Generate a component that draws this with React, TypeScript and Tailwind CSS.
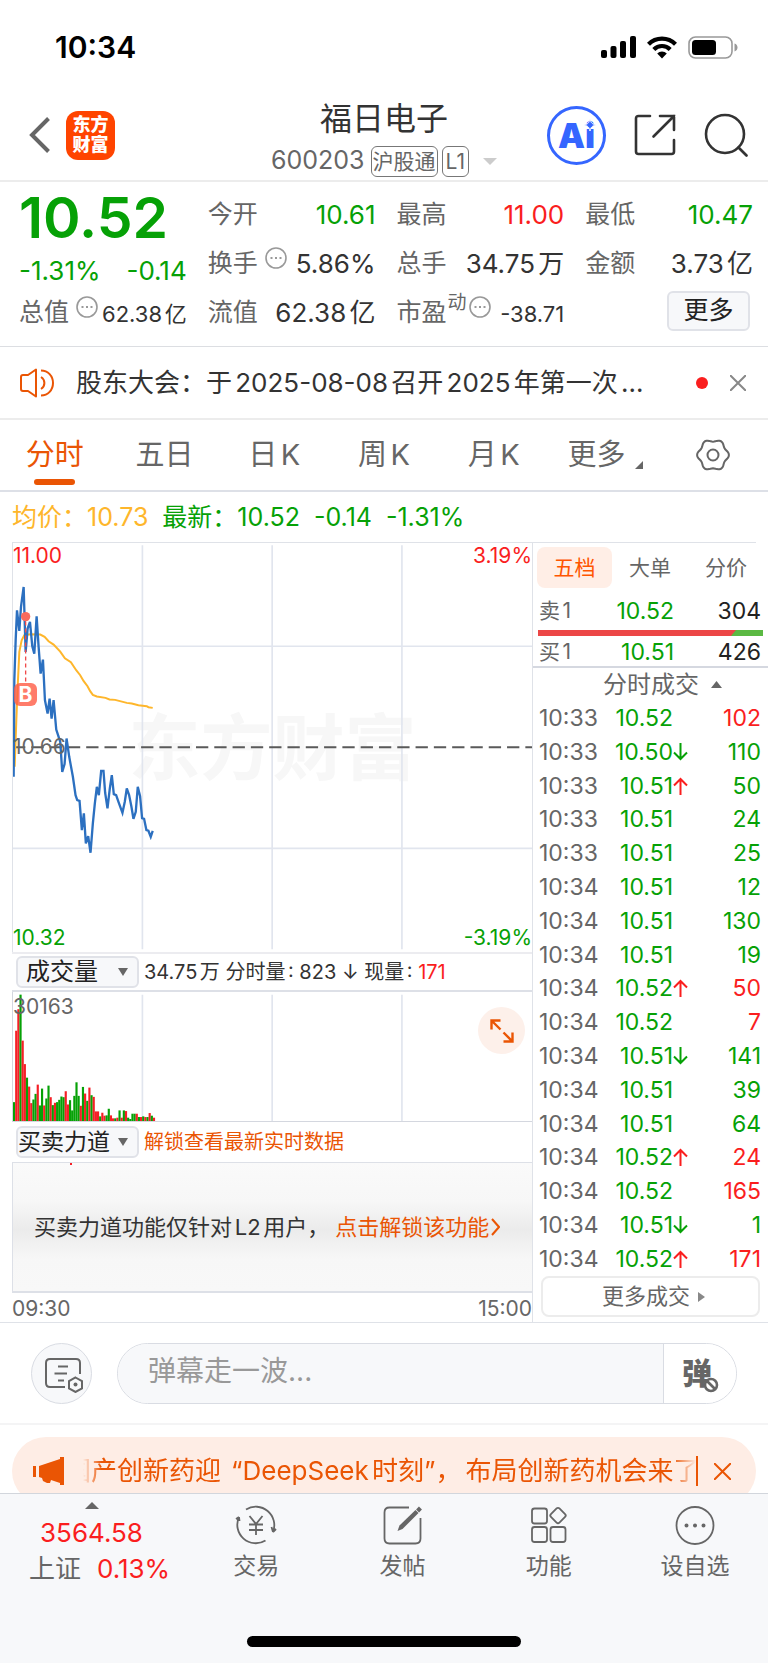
import { useState } from "react";
import { clsx } from "clsx";

type Side = "up" | "down";

interface Trade {
  time: string;
  price: string;
  arrow?: Side;
  volume: number;
  side: Side;
}

const TRADES: Trade[] = [
  { time: "10:33", price: "10.52", volume: 102, side: "up" },
  { time: "10:33", price: "10.50", arrow: "down", volume: 110, side: "down" },
  { time: "10:33", price: "10.51", arrow: "up", volume: 50, side: "down" },
  { time: "10:33", price: "10.51", volume: 24, side: "down" },
  { time: "10:33", price: "10.51", volume: 25, side: "down" },
  { time: "10:34", price: "10.51", volume: 12, side: "down" },
  { time: "10:34", price: "10.51", volume: 130, side: "down" },
  { time: "10:34", price: "10.51", volume: 19, side: "down" },
  { time: "10:34", price: "10.52", arrow: "up", volume: 50, side: "up" },
  { time: "10:34", price: "10.52", volume: 7, side: "up" },
  { time: "10:34", price: "10.51", arrow: "down", volume: 141, side: "down" },
  { time: "10:34", price: "10.51", volume: 39, side: "down" },
  { time: "10:34", price: "10.51", volume: 64, side: "down" },
  { time: "10:34", price: "10.52", arrow: "up", volume: 24, side: "up" },
  { time: "10:34", price: "10.52", volume: 165, side: "up" },
  { time: "10:34", price: "10.51", arrow: "down", volume: 1, side: "down" },
  { time: "10:34", price: "10.52", arrow: "up", volume: 171, side: "up" },
];

const PERIODS = ["分时", "五日", "日K", "周K", "月K", "更多"];

const PRICE_LINE =
  "40,710 42,420 46,300 50,210 57,272 62,200 70,140 76,335 82,265 89,245 96,318 102,340 109,228 115,320 121,400 128,358 134,480 142,520 148,475 154,535 160,480 168,568 180,605 186,695 193,672 199,595 207,650 218,710 226,765 231,780 238,782 245,870 251,820 257,910 264,888 271,938 278,850 284,790 290,740 296,765 303,692 310,692 315,758 322,805 329,745 335,705 341,762 348,765 355,785 367,818 374,785 380,745 387,765 394,800 400,836 407,815 413,740 420,768 426,834 432,836 439,870 445,872 452,890 458,872";

const AVERAGE_LINE =
  "43,680 48,540 52,440 57,335 64,300 72,285 90,282 120,283 133,290 145,303 160,313 180,334 194,354 212,366 228,390 240,405 250,422 262,438 270,453 278,464 290,469 316,473 328,478 345,479 380,488 395,490 415,495 440,498 445,501 458,503";

// r = traded up that minute, g = traded down
const VOLUMES =
  "g57 r273 r338 g382 r243 r172 g131 r104 r54 g65 g82 r110 g47 g98 r47 g68 g107 r72 g48 r55 g57 g64 g74 g72 r90 r50 g63 g32 g76 g117 g76 r46 g103 r83 g61 r101 g78 r73 r29 r29 g14 r25 r16 g17 g37 r17 r8 g8 r10 g32 r10 g32 r30 g10 g6 g22 g22 r22 g12 r12 g14 r12 g12 r24 g16 r10".split(" ");

const GEAR = Array.from({ length: 72 }, (_, i) => {
  const a = (i * Math.PI) / 36;
  const r = 14.6 + 1.3 * Math.cos(6 * a);
  return `${(17 + r * Math.cos(a)).toFixed(2)},${(17 + r * Math.sin(a)).toFixed(2)}`;
}).join(" ");

function StatusBar() {
  return (
    <div className="flex h-[94px] items-center justify-between pl-[55px] pr-[30px]">
      <span className="text-[30px] font-semibold text-black">10:34</span>
      <div className="flex items-center gap-[11px]">
        <svg className="h-[22px] w-[35px]" viewBox="0 0 35 22">
          <rect x="0" y="14" width="6" height="8" rx="2" />
          <rect x="9.5" y="10" width="6" height="12" rx="2" />
          <rect x="19" y="5" width="6" height="17" rx="2" />
          <rect x="29" y="0" width="6" height="22" rx="2" />
        </svg>
        <svg className="h-[23px] w-[30px]" viewBox="0 0 30 23" fill="none" stroke="black" strokeWidth="4.2">
          <path d="M1.5 8.2a19 19 0 0 1 27 0" />
          <path d="M6.8 13.4a11.6 11.6 0 0 1 16.4 0" />
          <path d="M10.2 17.4a6.8 6.8 0 0 1 9.6 0L15 22.4Z" fill="black" stroke="none" />
        </svg>
        <svg className="h-[23px] w-[50px]" viewBox="0 0 50 23">
          <rect x="1" y="1" width="43" height="21" rx="6.5" fill="none" stroke="#999" strokeWidth="1.6" />
          <rect x="4" y="4" width="24" height="15" rx="3.5" />
          <path d="M46.5 7.5v8c2-.6 3-2.2 3-4s-1-3.4-3-4Z" fill="#999" />
        </svg>
      </div>
    </div>
  );
}

function Header() {
  return (
    <header className="grid h-[88px] grid-cols-[1fr_auto_1fr] items-center border-b-2 border-[#ececec] px-5">
      <div className="flex items-center gap-4 pb-1 pl-[9px]">
        <button type="button" aria-label="返回">
          <svg className="h-[36px] w-[21px]" viewBox="0 0 21 36" fill="none" stroke="#666" strokeWidth="4">
            <path d="M19.5 1.5 3 18l16.5 16.5" />
          </svg>
        </button>
        <div className="flex size-[49px] flex-col items-center justify-center rounded-xl bg-[#ff4400] text-[18px] leading-[20px] font-black text-white">
          <span>东方</span>
          <span>财富</span>
        </div>
      </div>
      <div className="flex flex-col items-center gap-1">
        <h1 className="text-[32px] leading-[44px] text-[#333]">福日电子</h1>
        <div className="flex h-8 items-center text-[#666]">
          <span className="mr-1.5 text-[25px]">600203</span>
          <span className="mr-1 rounded-md border border-[#777] px-px text-[21px] leading-[29px]">沪股通</span>
          <span className="rounded-md border border-[#777] px-[3px] text-[21px] leading-[29px]">L1</span>
          <svg className="ml-3.5 h-[7px] w-[14px]" viewBox="0 0 14 7" fill="#ccc">
            <path d="M0 0h14L7 7Z" />
          </svg>
        </div>
      </div>
      <div className="flex items-center justify-end gap-[28px] pb-1">
        <button type="button" aria-label="Ai" className="relative flex size-[59px] items-center justify-center rounded-full border-[3px] border-[#3566ff] text-[34px] font-black text-[#3566ff]">
          Ai
          <svg className="absolute top-[10px] right-[7px] size-[12px]" viewBox="0 0 12 12" fill="#3566ff" stroke="white">
            <path d="M6 0C7 4 8 5 12 6 8 7 7 8 6 12 5 8 4 7 0 6 4 5 5 4 6 0Z" />
          </svg>
        </button>
        <button type="button" aria-label="分享">
          <svg className="size-[42px]" viewBox="0 0 42 42" fill="none" stroke="#333" strokeWidth="2.6" strokeLinecap="round">
            <path d="M16 2H4.5Q2 2 2 4.5v33Q2 40 4.5 40h33q2.5 0 2.5-2.5V26" />
            <path d="M26 2h14v14M40 2 19.5 22.5" />
          </svg>
        </button>
        <button type="button" aria-label="搜索">
          <svg className="size-[44px]" viewBox="0 0 44 44" fill="none" stroke="#333" strokeWidth="2.6" strokeLinecap="round">
            <circle cx="21" cy="21" r="19" />
            <path d="m34.5 34.5 8 8" />
          </svg>
        </button>
      </div>
    </header>
  );
}

function Hint() {
  return (
    <svg className="size-[22px] self-start" viewBox="0 0 22 22" fill="none" stroke="#999" strokeWidth="1.6">
      <circle cx="11" cy="11" r="10" />
      <path d="M5.5 11h2M10 11h2M14.5 11h2" strokeWidth="2" />
    </svg>
  );
}

interface StatProps {
  label: string;
  value: string;
  tone?: Side;
  sup?: string;
  hint?: boolean;
  small?: boolean;
}

function Stat({ label, value, tone, sup, hint, small }: StatProps) {
  return (
    <div className="flex h-[49px] items-center justify-between">
      <dt className="flex h-8 items-center text-[25px] whitespace-nowrap text-[#666]">
        {label}
        {sup && <sup className="ml-px text-[19px]">{sup}</sup>}
        {hint && <span className={clsx("flex h-[34px]", sup ? "ml-0.5" : "ml-[7px]")}><Hint /></span>}
      </dt>
      <dd
        className={clsx(
          "whitespace-nowrap",
          small ? "pt-1 text-[22px]" : "text-[26px]",
          tone === "up" && "text-[#fa1e1e]",
          tone === "down" && "text-[#06a106]",
          !tone && "text-[#333]"
        )}
      >
        {value}
      </dd>
    </div>
  );
}

function Quote() {
  return (
    <section className="border-b border-[#dcdee2] pt-2 pr-[15px] pb-[9px] pl-[19px]">
      <dl className="grid grid-cols-4 gap-x-[21px]">
        <div>
          <div className="flex h-[55px] items-center text-[57px] font-semibold text-[#06a106]">10.52</div>
          <div className="flex h-[43px] items-center justify-between pt-2 text-[26px] whitespace-nowrap text-[#06a106]">
            <span>-1.31%</span>
            <span>-0.14</span>
          </div>
          <Stat label="总值" value="62.38亿" hint small />
        </div>
        <div>
          <Stat label="今开" value="10.61" tone="down" />
          <Stat label="换手" value="5.86%" hint />
          <Stat label="流值" value="62.38亿" />
        </div>
        <div>
          <Stat label="最高" value="11.00" tone="up" />
          <Stat label="总手" value="34.75万" />
          <Stat label="市盈" sup="动" value="-38.71" hint small />
        </div>
        <div>
          <Stat label="最低" value="10.47" tone="down" />
          <Stat label="金额" value="3.73亿" />
          <div className="flex h-[49px] items-center justify-end pr-[3px] pb-1">
            <button type="button" className="h-10 w-[83px] rounded-md border-2 border-[#e0e2e8] bg-[#f7f8fa] text-[25px] leading-none text-[#222]">更多</button>
          </div>
        </div>
      </dl>
    </section>
  );
}

function Notice() {
  return (
    <section className="flex h-[73px] items-center border-b-2 border-[#ececec] pr-[22px] pl-5">
      <svg className="h-[30px] w-[35px] shrink-0" viewBox="0 0 35 30" fill="none" stroke="#ea5504" strokeWidth="2">
        <path d="M1 9q0-2 2-2h5l8-5.5v27L8 23H3q-2 0-2-2Z" strokeLinejoin="round" />
        <path d="M21 9a7 7 0 0 1 0 12M21 2.5c7 0 12 5.5 12 12.5s-5 12.5-12 12.5" />
      </svg>
      <p className="ml-[21px] flex-1 truncate text-[26px] text-[#333]">股东大会：于2025-08-08召开2025年第一次...</p>
      <span className="size-3 shrink-0 rounded-full bg-[#fa1e1e]" />
      <button type="button" aria-label="关闭" className="ml-[22px]">
        <svg className="size-4" viewBox="0 0 16 16" stroke="#888" strokeWidth="2">
          <path d="m0 0 16 16M16 0 0 16" />
        </svg>
      </button>
    </section>
  );
}

function PeriodTabs() {
  const [active, setActive] = useState("分时");
  return (
    <nav className="grid h-[72px] grid-cols-7 border-b-2 border-[#dde0e7]">
      {PERIODS.map((p) => (
        <button
          key={p}
          type="button"
          onClick={() => setActive(p)}
          className={clsx(
            "relative flex items-center justify-center text-[29px]",
            active === p ? "text-[#ea5504]" : "text-[#666]",
            p === "更多" && "pl-1"
          )}
        >
          {p}
          {p === "更多" && (
            <svg className="mt-5 ml-2.5 size-2" viewBox="0 0 8 8" fill="#666">
              <path d="M8 0v8H0Z" />
            </svg>
          )}
          {active === p && <span className="absolute bottom-[5px] h-1.5 w-[41px] rounded-full bg-[#ea5504]" />}
        </button>
      ))}
      <button type="button" aria-label="设置" className="flex items-center justify-center">
        <svg className="size-[34px]" viewBox="0 0 34 34" fill="none" stroke="#666" strokeWidth="2">
          <polygon points={GEAR} />
          <circle cx="17" cy="17" r="5.5" />
        </svg>
      </button>
    </nav>
  );
}

function PriceChart() {
  return (
    <div className="relative h-[409px] border-l border-[#dfe2e8] text-[21px] leading-6">
      <div className="absolute inset-0 flex items-center justify-center text-[72px] font-bold text-[#f7f7f7]">东方财富</div>
      <svg className="absolute inset-0 h-full w-full" viewBox="38 8 1560 1228" preserveAspectRatio="none" fill="none">
        <path d="M427 15V1228M817 15V1228M1207 15V1228" stroke="#e1e5ee" strokeWidth="5" />
        <path d="M38 318H1598M38 925H1598" stroke="#e1e5ee" strokeWidth="5" />
        <path d="M38 621H1598" stroke="#5a5a5a" strokeWidth="6" strokeDasharray="37 18" />
        <polyline points={AVERAGE_LINE} stroke="#feb62b" strokeWidth="6" />
        <polyline points={PRICE_LINE} stroke="#2c70c0" strokeWidth="7" />
        <path d="M76 244V430" stroke="#f04a4a" strokeWidth="4" strokeDasharray="12 9" />
        <circle cx="76" cy="229" r="14" fill="#f96a5e" />
      </svg>
      <span className="absolute top-[140px] left-px size-[23px] rounded-md bg-[#ff5b45]/80 text-center text-[21px] leading-[23px] font-bold text-white">B</span>
      <span className="absolute top-px left-0 text-[#fa1e1e]">11.00</span>
      <span className="absolute top-px right-0 text-[#fa1e1e]">3.19%</span>
      <span className="absolute top-[192px] left-0 text-[#666]">10.66</span>
      <span className="absolute bottom-0.5 left-0 text-[#06a106]">10.32</span>
      <span className="absolute right-0 bottom-0.5 text-[#06a106]">-3.19%</span>
    </div>
  );
}

function VolumeChart() {
  return (
    <div className="relative h-[130px] border-b border-l border-[#d4d7df]">
      <svg className="absolute inset-0 h-full w-full" viewBox="38 36 1560 390" preserveAspectRatio="none">
        <path d="M427 44V426M817 44V426M1207 44V426" stroke="#e1e5ee" strokeWidth="5" />
        {VOLUMES.map((v, i) => {
          const h = Number(v.slice(1));
          return <rect key={i} x={38 + i * 6.47} y={426 - h} width="6.5" height={h} fill={v[0] === "r" ? "#f51f26" : "#06a106"} />;
        })}
      </svg>
      <span className="absolute top-[3px] left-0 text-[21px] leading-6 text-[#666]">30163</span>
      <button type="button" aria-label="全屏" className="absolute top-[15px] right-[7px] flex size-[47px] items-center justify-center rounded-full bg-[#fdf0ea]">
        <svg className="size-6" viewBox="0 0 24 24" fill="none" stroke="#ea5504" strokeWidth="2.4">
          <path d="M1.5 10.5v-9h9M1.5 1.5l9 9M22.5 13.5v9h-9M22.5 22.5l-9-9" />
        </svg>
      </button>
    </div>
  );
}

function IndicatorSelect({ value, tight }: { value: string; tight?: boolean }) {
  return (
    <div className="relative ml-1 h-8 w-[123px] shrink-0">
      <select
        aria-label="指标"
        defaultValue={value}
        className={clsx(
          "h-full w-full appearance-none rounded-md border-2 border-[#e0e2e8] bg-[#f7f8fa] leading-7 text-[#222]",
          tight ? "pl-0 text-[23px]" : "pl-2 text-[24px]"
        )}
      >
        <option>{value}</option>
      </select>
      <svg className="pointer-events-none absolute top-3 right-[11px] h-2 w-[10px]" viewBox="0 0 10 8" fill="#666">
        <path d="M0 0h10L5 8Z" />
      </svg>
    </div>
  );
}

function Charts() {
  return (
    <div className="flex min-w-0 flex-1 flex-col">
      <PriceChart />
      <div className="flex h-10 items-center border-y-2 border-t-[#ececf0] border-b-[#dde0e7]">
        <IndicatorSelect value="成交量" />
        <p className="ml-[5px] text-[20px] whitespace-pre text-[#333]">
          34.75万 分时量: 823 ↓ 现量: <span className="text-[#fa1e1e]">171</span>
        </p>
      </div>
      <VolumeChart />
      <div className="flex h-10 items-center">
        <IndicatorSelect value="买卖力道" tight />
        <a href="#unlock" className="ml-[5px] text-[20px] whitespace-nowrap text-[#ea5504]">解锁查看最新实时数据</a>
      </div>
      <div className="relative flex h-[131px] items-center border-t border-b-2 border-l border-[#dde0e7] bg-[linear-gradient(#fafafa,#f7f7f7_30%,#ebebeb_52%,#f7f7f7_75%,#f8f8f8)] pl-[21px] text-[22px] whitespace-nowrap text-[#333]">
        <span className="absolute top-0 left-[57px] h-0.5 w-0.5 bg-[#f51f26]" />
        买卖力道功能仅针对L2用户，
        <a href="#l2" className="ml-1.5 flex items-center text-[#ea5504]">
          点击解锁该功能
          <svg className="ml-0.5 h-[18px] w-[9px]" viewBox="0 0 9 18" fill="none" stroke="#ea5504" strokeWidth="2">
            <path d="m1 1 7 8-7 8" />
          </svg>
        </a>
      </div>
      <div className="flex h-[29px] items-center justify-between pt-0.5 text-[21px] text-[#666]">
        <span>09:30</span>
        <span>15:00</span>
      </div>
    </div>
  );
}

function TradeArrow({ dir }: { dir: Side }) {
  return (
    <svg className="h-[18px] w-[15px]" viewBox="0 0 15 18" fill="none" stroke={dir === "up" ? "#fa1e1e" : "#06a106"} strokeWidth="2">
      <path d={dir === "up" ? "M7.5 18V2M1 8.5 7.5 2 14 8.5" : "M7.5 0v16M1 9.5 7.5 16 14 9.5"} />
    </svg>
  );
}

function OrderBook() {
  return (
    <aside className="flex w-[236px] shrink-0 flex-col border-l border-[#dfe2e8]">
      <div className="flex h-[49px] items-center pl-1 text-[21px]">
        <button type="button" className="h-[41px] w-[75px] rounded-lg bg-[#ffeee6] text-[#ff5500]">五档</button>
        <button type="button" className="h-[41px] w-[76px] text-[#666]">大单</button>
        <button type="button" className="h-[41px] w-[76px] text-[#666]">分价</button>
      </div>
      <table className="mr-[7px] ml-[6px] table-fixed text-[23px] leading-[26px]">
        <tbody>
          <tr>
            <td className="h-[38px] w-[54px] text-[21px] text-[#666]">卖1</td>
            <td className="w-[81px] text-right text-[#06a106]">10.52</td>
            <td className="text-right text-[#222]">304</td>
          </tr>
        </tbody>
      </table>
      <div className="mr-[5px] ml-[5px] flex h-[6px] bg-[#5bb943]">
        <svg className="h-full w-[88%]" viewBox="0 0 197 6" preserveAspectRatio="none" fill="#ec4646">
          <path d="M0 0h197l-5 6H0Z" />
        </svg>
      </div>
      <table className="mr-[7px] ml-[6px] table-fixed text-[23px] leading-[26px]">
        <tbody>
          <tr>
            <td className="h-[30px] w-[54px] pt-0.5 text-[21px] text-[#666]">买1</td>
            <td className="w-[81px] pt-0.5 text-right text-[#06a106]">10.51</td>
            <td className="pt-0.5 text-right text-[#222]">426</td>
          </tr>
        </tbody>
      </table>
      <div className="flex h-[35px] items-center justify-center gap-3 border-t-2 border-[#d5d8e0] pl-6 text-[24px] leading-8 text-[#666]">
        分时成交
        <svg className="h-[7px] w-[11px]" viewBox="0 0 11 7" fill="#666">
          <path d="M0 7h11L5.5 0Z" />
        </svg>
      </div>
      <table className="mr-[7px] ml-[6px] flex-1 table-fixed text-[23px] leading-6">
        <tbody>
          {TRADES.map((t, i) => (
            <tr key={i} className="h-[33px]">
              <td className="w-[62px] text-[#666]">{t.time}</td>
              <td className="w-[72px] text-right text-[#06a106]">{t.price}</td>
              <td className="w-[17px]">{t.arrow && <TradeArrow dir={t.arrow} />}</td>
              <td className={clsx("text-right", t.side === "up" ? "text-[#fa1e1e]" : "text-[#06a106]")}>{t.volume}</td>
            </tr>
          ))}
        </tbody>
      </table>
      <button type="button" className="mr-2 mb-[5px] ml-2 flex h-[41px] items-center justify-center gap-2 rounded-lg border-2 border-[#ececec] pl-1.5 text-[22px] text-[#666]">
        更多成交
        <svg className="h-[10px] w-[7px]" viewBox="0 0 7 10" fill="#888">
          <path d="M0 0v10l7-5Z" />
        </svg>
      </button>
    </aside>
  );
}

function Barrage() {
  return (
    <section className="flex h-[103px] items-center border-t border-b-2 border-t-[#dfe2e8] border-b-[#f4f4f5] pr-[31px] pl-[31px]">
      <button type="button" aria-label="弹幕设置" className="flex size-[61px] shrink-0 items-center justify-center rounded-full border border-[#d9dce3] bg-[#f7f8fa]">
        <svg className="mt-1 ml-1 h-[35px] w-[38px]" viewBox="0 0 38 35" fill="none" stroke="#666" strokeWidth="2">
          <path d="M20 29H5q-4 0-4-4V5q0-4 4-4h26q4 0 4 4v11" />
          <path d="M13 8.5h10M9.5 15.5H22M13 22.5h6" />
          <path d="m30.5 19.5 6.5 3.7v7.3L30.5 34 24 30.5v-7.3Z" />
          <circle cx="30.5" cy="26.5" r="2" fill="#666" stroke="none" />
        </svg>
      </button>
      <div className="ml-[25px] flex h-[61px] min-w-0 flex-1 overflow-hidden rounded-full border border-[#d9dce3]">
        <input
          type="text"
          aria-label="弹幕"
          placeholder="弹幕走一波..."
          className="min-w-0 flex-1 bg-[#f7f8fa] pb-1 pl-[30px] text-[28px] text-[#333] placeholder-[#999] outline-none [text-autospace:no-autospace]"
        />
        <button type="button" aria-label="弹幕开关" className="relative w-[73px] border-l border-[#d9dce3] bg-white pr-1.5 text-[30px] leading-none font-black text-[#666]">
          弹
          <svg className="absolute right-[17px] bottom-[10px] size-4" viewBox="0 0 16 16" fill="white" stroke="#666" strokeWidth="2.6">
            <circle cx="8" cy="8" r="6" />
            <path d="m4 4 8 8" />
          </svg>
        </button>
      </div>
    </section>
  );
}

function Banner() {
  return (
    <section className="h-[68px] overflow-hidden px-3 pt-3">
      <div className="flex h-[68px] items-center rounded-full bg-[#feede5] pr-[25px] pl-[21px] text-[#ea5504]">
        <svg className="h-[28px] w-[31px] shrink-0" viewBox="0 0 31 28" fill="#ea5504">
          <path d="M0 9h3v11H0ZM6 9 27 2V0h4v28h-4v-2l-9-3-1 3h-3l-4-2-1-3-3-1Z" />
        </svg>
        <div className="ml-[19px] min-w-0 flex-1 overflow-hidden [mask-image:linear-gradient(90deg,transparent,black_3%,black_96%,transparent)]">
          <p className="-ml-[18px] text-[26px] leading-10 whitespace-nowrap">
            国产创新药迎<span className="mr-1 ml-2.5">“DeepSeek时刻”，</span>布局创新药机会来了
          </p>
        </div>
        <span className="h-[30px] w-0.5 bg-[#ea5504]" />
        <button type="button" aria-label="关闭" className="ml-4">
          <svg className="size-[17px]" viewBox="0 0 17 17" stroke="#ea5504" strokeWidth="2">
            <path d="m0 0 17 17M17 0 0 17" />
          </svg>
        </button>
      </div>
    </section>
  );
}

const ACTIONS = [
  {
    label: "交易",
    icon: (
      <>
        <path d="M12 5.5A18.5 18.5 0 0 1 39 28M39 28l3-3M39 28l-1.5-5M31.5 36.5A18.5 18.5 0 0 1 5 13M5 13l-3 2M5 13l.5 4" />
        <path d="m15.5 12 6.5 8 6.5-8M15 20.5h14M15 26h14M22 20v11" />
      </>
    ),
  },
  {
    label: "发帖",
    icon: (
      <>
        <path d="M29 3.5H9.5q-5 0-5 5v26q0 5 5 5h26q5 0 5-5V14" />
        <path d="m17.5 27 2-5.5L35.5 6l3 3L22.5 25Z" fill="#666" stroke="none" />
        <path d="m37.5 4 3 3" strokeWidth="4" />
      </>
    ),
  },
  {
    label: "功能",
    icon: (
      <>
        <rect x="5" y="4.5" width="15" height="15" rx="2.5" />
        <rect x="5" y="23" width="15" height="15" rx="2.5" />
        <rect x="23.5" y="23" width="15" height="15" rx="2.5" />
        <rect x="25" y="5.5" width="12" height="12" rx="2" transform="rotate(45 31 11.5)" />
      </>
    ),
  },
  {
    label: "设自选",
    icon: (
      <>
        <circle cx="22" cy="21.5" r="18.5" />
        <path d="M13.5 21.5h.01M22 21.5h.01M30.5 21.5h.01" strokeWidth="4" strokeLinecap="round" />
      </>
    ),
  },
];

function BottomNav() {
  return (
    <footer className="border-t border-[#d2d6dc] bg-[#f7f8fa] pb-4">
      <div className="flex h-[142px] pt-2">
        <button type="button" className="flex w-[183px] flex-col items-center self-start text-[26px]">
          <svg className="h-[7px] w-[14px]" viewBox="0 0 14 7" fill="#666">
            <path d="M0 7h14L7 0Z" />
          </svg>
          <span className="mt-1.5 leading-9 text-[#fa1e1e]">3564.58</span>
          <span className="flex gap-4 pl-4 leading-9 text-[#666]">
            上证<span className="text-[#fa1e1e]">0.13%</span>
          </span>
        </button>
        {ACTIONS.map((a) => (
          <button key={a.label} type="button" className="flex flex-1 flex-col items-center self-start text-[23px] leading-9 text-[#666]">
            <svg className="mt-0.5 size-[44px]" viewBox="0 0 44 44" fill="none" stroke="#666" strokeWidth="1.8">
              {a.icon}
            </svg>
            {a.label}
          </button>
        ))}
      </div>
      <div className="mx-auto h-[11px] w-[274px] rounded-full bg-black" />
    </footer>
  );
}

export default function App() {
  return (
    <div className="bg-white font-[Inter,'Noto_Sans_CJK_SC',sans-serif] [text-autospace:normal]" lang="zh-CN">
      <StatusBar />
      <Header />
      <Quote />
      <Notice />
      <PeriodTabs />
      <div className="flex h-[50px] items-center gap-3.5 pt-0.5 pl-3 text-[25px] text-[#06a106]">
        <span className="text-[#feb62b]">均价：10.73</span>
        <span>最新：10.52</span>
        <span>-0.14</span>
        <span>-1.31%</span>
      </div>
      <div className="mr-3 ml-3 border-t border-[#dfe2e8]" />
      <main className="flex pl-3">
        <Charts />
        <OrderBook />
      </main>
      <Barrage />
      <Banner />
      <BottomNav />
    </div>
  );
}
